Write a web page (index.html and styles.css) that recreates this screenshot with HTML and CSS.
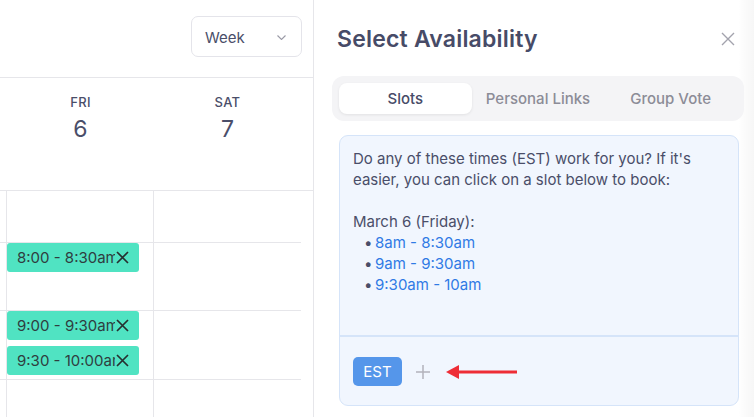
FILE: index.html
```html
<!DOCTYPE html>
<html lang="en">
<head>
    <meta charset="UTF-8">
    <meta name="viewport" content="width=device-width, initial-scale=1.0">
    <title>Select Availability</title>
    <link rel="stylesheet" href="styles.css">
</head>
<body>
    <div class="app">
        <!-- Calendar week view -->
        <section class="calendar">
            <div class="toolbar">
                <div class="view-select">
                    <span>Week</span>
                    <svg class="chevron" width="9" height="5" viewBox="0 0 9 5"><path d="M0.5 0.5l4 4 4-4" fill="none" stroke="#9a9aa6" stroke-width="1.1"/></svg>
                </div>
            </div>
            <div class="day-head">
                <div class="gutter"></div>
                <div class="day"><span class="dow">FRI</span><span class="dnum">6</span></div>
                <div class="day"><span class="dow">SAT</span><span class="dnum">7</span></div>
            </div>
            <div class="grid">
                <div class="row row-a">
                    <div class="gutter"></div><div class="cell"></div><div class="cell last"></div>
                </div>
                <div class="row row-b">
                    <div class="gutter"></div>
                    <div class="cell">
                        <div class="event">
                            <span class="event-label">8:00 - 8:30am</span>
                            <svg class="event-x" width="13" height="13" viewBox="0 0 13 13"><path d="M1 1l11 11M12 1L1 12" stroke="#263030" stroke-width="1.7"/></svg>
                        </div>
                    </div>
                    <div class="cell last"></div>
                </div>
                <div class="row row-c">
                    <div class="gutter"></div>
                    <div class="cell">
                        <div class="event">
                            <span class="event-label">9:00 - 9:30am</span>
                            <svg class="event-x" width="13" height="13" viewBox="0 0 13 13"><path d="M1 1l11 11M12 1L1 12" stroke="#263030" stroke-width="1.7"/></svg>
                        </div>
                        <div class="event">
                            <span class="event-label">9:30 - 10:00am</span>
                            <svg class="event-x" width="13" height="13" viewBox="0 0 13 13"><path d="M1 1l11 11M12 1L1 12" stroke="#263030" stroke-width="1.7"/></svg>
                        </div>
                    </div>
                    <div class="cell last"></div>
                </div>
                <div class="row row-d">
                    <div class="gutter"></div><div class="cell"></div><div class="cell last"></div>
                </div>
            </div>
        </section>

        <!-- Availability side panel -->
        <aside class="panel">
            <div class="panel-head">
                <h1>Select Availability</h1>
                <svg class="close" width="14" height="14" viewBox="0 0 14 14"><path d="M1 1l12 12M13 1L1 13" stroke="#a3a3ad" stroke-width="1.4"/></svg>
            </div>
            <div class="tabs">
                <div class="tab active">Slots</div>
                <div class="tab">Personal Links</div>
                <div class="tab">Group Vote</div>
            </div>
            <div class="message">
                <div class="message-text">
                    <p>Do any of these times (EST) work for you? If it's easier, you can click on a slot below to book:</p>
                    <p class="date">March 6 (Friday):</p>
                    <ul>
                        <li><a href="#">8am - 8:30am</a></li>
                        <li><a href="#">9am - 9:30am</a></li>
                        <li><a href="#">9:30am - 10am</a></li>
                    </ul>
                </div>
                <div class="message-foot">
                    <span class="tz">EST</span>
                    <svg class="plus" width="14" height="14" viewBox="0 0 14 14"><path d="M7 0v14M0 7h14" stroke="#b3b3bc" stroke-width="1.5"/></svg>
                    <svg class="arrow" width="72" height="16" viewBox="0 0 72 16"><path d="M12 8H71" stroke="#ee2d36" stroke-width="3"/><path d="M0 8L13 1V15Z" fill="#ee2d36"/></svg>
                </div>
            </div>
        </aside>
    </div>
</body>
</html>
```

FILE: styles.css
```css
/* Base */
body {
    margin: 0;
    font-family: 'Inter', 'Noto Sans', sans-serif;
    color: #4a4e69;
    background: #ffffff;
    overflow: hidden;
}

.app {
    display: flex;
    width: 754px;
    height: 417px;
    overflow: hidden;
}

/* Calendar */
.calendar {
    width: 313px;
    flex: none;
    border-right: 1px solid #e6e6ea;
    display: flex;
    flex-direction: column;
}

.calendar > * {
    flex: none;
}

.toolbar {
    height: 78px;
    border-bottom: 1px solid #e6e6ea;
    display: flex;
    justify-content: flex-end;
    align-items: flex-start;
    padding: 16px 11px 0 0;
    box-sizing: border-box;
}

.view-select {
    width: 111px;
    height: 41px;
    box-sizing: border-box;
    border: 1px solid #e4e4ea;
    border-radius: 7px;
    display: flex;
    align-items: center;
    justify-content: space-between;
    padding: 1px 15px 0 13px;
    font-size: 15px;
}

.day-head {
    height: 112px;
    display: grid;
    grid-template-columns: 7px 147px 147px;
    border-bottom: 1px solid #e6e6ea;
}

.day {
    display: flex;
    flex-direction: column;
    align-items: center;
    padding-top: 16px;
}

.dow {
    font-size: 13px;
    font-weight: 500;
    letter-spacing: 0.3px;
}

.dnum {
    font-size: 23px;
    margin-top: 5px;
}

/* Hour grid */
.row {
    display: grid;
    grid-template-columns: 7px 147px 147px;
    width: 301px;
    border-bottom: 1px solid #e6e6ea;
}

.row-a { height: 51px; }
.row-b { height: 67px; }
.row-c { height: 68px; }
.row-d { height: 40px; border-bottom: none; }

.gutter {
    border-right: 1px solid #e6e6ea;
}

.day-head .gutter {
    border-right: none;
}

.cell {
    border-right: 1px solid #e6e6ea;
    display: flex;
    flex-direction: column;
    gap: 6px;
}

.cell.last {
    border-right: none;
}

.event {
    width: 132px;
    height: 29px;
    flex: none;
    background: #50e3c2;
    border-radius: 3px;
    display: flex;
    align-items: center;
    padding-left: 10px;
    box-sizing: border-box;
    color: #2f3d3f;
    font-size: 15px;
    overflow: hidden;
}

.event-label {
    white-space: nowrap;
    overflow: hidden;
    width: 98px;
    flex: none;
}

.event-x {
    flex: none;
    margin-left: 1px;
}

/* Side panel */
.panel {
    flex: 1;
    padding: 0 10px 0 18px;
    background: linear-gradient(to left, rgba(0, 0, 0, 0.035), rgba(0, 0, 0, 0) 16px);
}

.panel-head {
    display: flex;
    justify-content: space-between;
    align-items: center;
    padding: 28px 9px 0 5px;
    height: 50px;
    box-sizing: border-box;
}

.panel-head h1 {
    margin: 0;
    font-size: 23px;
    font-weight: 600;
    color: #474b67;
    letter-spacing: 0.2px;
}

.close {
    margin-top: 0;
}

.tabs {
    margin-top: 26px;
    height: 45px;
    background: #f4f4f6;
    border-radius: 12px;
    padding: 7px;
    box-sizing: border-box;
    display: grid;
    grid-template-columns: repeat(3, 1fr);
    width: 412px;
}

.tab {
    display: flex;
    align-items: center;
    justify-content: center;
    font-size: 15px;
    font-weight: 500;
    color: #8c8c97;
}

.tab.active {
    background: #ffffff;
    border-radius: 8px;
    color: #474b67;
    box-shadow: 0 1px 3px rgba(0, 0, 0, 0.08);
}

.message {
    margin: 14px 0 0 7px;
    width: 400px;
    height: 271px;
    box-sizing: border-box;
    background: #f1f6fe;
    border: 1px solid #d5e4f9;
    border-radius: 9px;
    display: flex;
    flex-direction: column;
}

.message-text {
    height: 201px;
    border-bottom: 2px solid #d5e4f9;
    padding: 12px 13px 0;
    box-sizing: border-box;
    font-size: 15px;
    line-height: 21px;
}

.message-text p {
    margin: 0;
}

.message-text .date {
    margin-top: 21px;
}

.message-text ul {
    margin: 0;
    padding-left: 11px;
    list-style: none;
}

.message-text li::before {
    content: "\2022";
    display: inline-block;
    width: 11px;
    color: #4a4e69;
}

.message-text a {
    color: #2f7ae5;
    text-decoration: none;
}

.message-foot {
    display: flex;
    align-items: center;
    padding: 20px 13px 0;
}

.tz {
    background: #5596ea;
    color: #ffffff;
    font-size: 15px;
    width: 49px;
    height: 29px;
    border-radius: 5px;
    display: flex;
    align-items: center;
    justify-content: center;
}

.plus {
    margin-left: 14px;
}

.arrow {
    margin-left: 16px;
}
```
